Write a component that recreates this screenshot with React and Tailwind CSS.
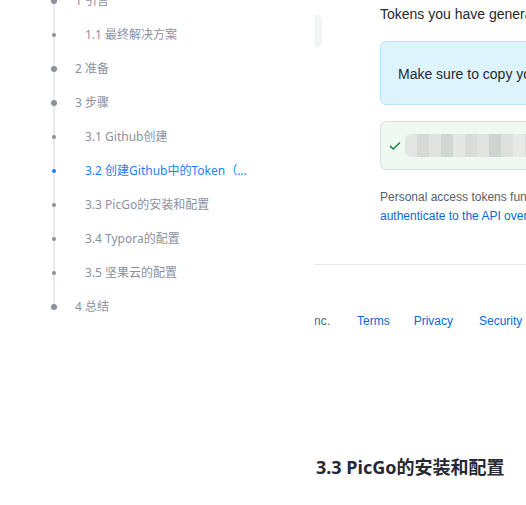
const toc = [
  { level: 1, text: "1 引言" },
  { level: 2, text: "1.1 最终解决方案" },
  { level: 1, text: "2 准备" },
  { level: 1, text: "3 步骤" },
  { level: 2, text: "3.1 Github创建" },
  { level: 2, text: "3.2 创建Github中的Token（...", active: true },
  { level: 2, text: "3.3 PicGo的安装和配置" },
  { level: 2, text: "3.4 Typora的配置" },
  { level: 2, text: "3.5 坚果云的配置" },
  { level: 1, text: "4 总结" },
];

const mosaic = [
  "#e3e6e3", "#d6d9d6", "#dfe2df", "#d2d6d2", "#e4e7e4", "#d9dcd9",
  "#e1e4e1", "#d0d4d0", "#dde0dd", "#e6e9e6", "#d5d8d5", "#dee1de",
];

function TocRow({ item, last }) {
  return (
    <li className="flex h-[34px] items-center">
      <div className="grid h-full w-[20px] shrink-0 place-items-center">
        <div
          className={
            last
              ? "h-1/2 w-[2px] self-start bg-[#e8eaee] [grid-area:1/1]"
              : "h-full w-[2px] bg-[#e8eaee] [grid-area:1/1]"
          }
        />
        <div
          className={
            (item.level === 1 ? "h-[6px] w-[6px] " : "h-[4px] w-[4px] ") +
            (item.active ? "bg-[#1e80ff] " : "bg-[#8a919f] ") +
            "rounded-full [grid-area:1/1]"
          }
        />
      </div>
      <span
        className={
          (item.level === 1 ? "ml-[11px] " : "ml-[21px] ") +
          (item.active ? "text-[#1e80ff] " : "text-[#8a919f] ") +
          "whitespace-nowrap text-[12px] leading-none"
        }
      >
        {item.text}
      </span>
    </li>
  );
}

export default function App() {
  return (
    <div className="flex h-[505px] w-[526px] overflow-hidden bg-white">
      <aside className="w-[315px] shrink-0 bg-white font-['Noto_Sans','Noto_Sans_CJK_SC',sans-serif]">
        <ul className="-mt-[16px] pl-[44px]">
          {toc.map((item, i) => (
            <TocRow key={i} item={item} last={i === toc.length - 1} />
          ))}
        </ul>
      </aside>

      <main className="min-w-0 flex-1 overflow-hidden">
        <div className="font-['Liberation_Sans',sans-serif] text-[#24292f]">
          <div className="flex">
            <div className="mt-[14px] h-[34px] w-[7px] shrink-0 rounded-r-md bg-[#f3f4f6]" />
            <div className="ml-[58px] flex w-[520px] shrink-0 flex-col">
              <p className="-mt-[1px] whitespace-nowrap text-[14px] leading-[30px]">
                Tokens you have generated that can be used to access the GitHub API.
              </p>
              <div className="mt-[12px] flex h-[64px] items-center rounded-md border border-[#b6e3ff] bg-[#ddf4ff] pl-[17px] pt-[3px]">
                <span className="whitespace-nowrap text-[14px]">
                  Make sure to copy your personal access token now. You won’t be able to see it again!
                </span>
              </div>
              <div className="mt-[16px] flex h-[49px] items-center rounded-md border border-[#d8dee4] bg-[#f0f9f1] pl-[8px]">
                <svg width="12" height="12" viewBox="0 0 16 16" fill="none" className="shrink-0">
                  <path d="M2 8.5l3.5 3.5L14 4" stroke="#1a7f37" strokeWidth="2" strokeLinecap="round" strokeLinejoin="round" />
                </svg>
                <div className="ml-[4px] flex h-[23px] overflow-hidden rounded-l-md blur-[0.7px]">
                  {mosaic.map((c, i) => (
                    <div key={i} className="h-full w-[12px]" style={{ backgroundColor: c }} />
                  ))}
                </div>
              </div>
              <p className="mt-[18px] whitespace-nowrap text-[12px] leading-[19px] text-[#57606a]">
                Personal access tokens function like ordinary OAuth access tokens. They can be used instead of a password for Git over HTTPS, or can be used to
              </p>
              <p className="whitespace-nowrap text-[12px] leading-[19px] text-[#0969da]">
                authenticate to the API over Basic Authentication.
              </p>
            </div>
          </div>

          <div className="mt-[38px] h-px w-full bg-[#e4e4e4]" />

          <div className="mt-[47px] flex items-center whitespace-nowrap text-[12px] leading-[18px]">
            <span className="-ml-[115px] w-[130px] shrink-0 text-right text-[#57606a]">© 2022 GitHub, Inc.</span>
            <span className="ml-[27px] text-[#0969da]">Terms</span>
            <span className="ml-[24px] text-[#0969da]">Privacy</span>
            <span className="ml-[26px] text-[#0969da]">Security</span>
            <span className="ml-[26px] text-[#0969da]">Status</span>
          </div>
        </div>

        <h3 className="ml-px mt-[124px] whitespace-nowrap font-['Noto_Sans','Noto_Sans_CJK_SC',sans-serif] text-[18px] font-bold leading-[26px] text-[#252933]">
          3.3 PicGo的安装和配置
        </h3>
      </main>
    </div>
  );
}
